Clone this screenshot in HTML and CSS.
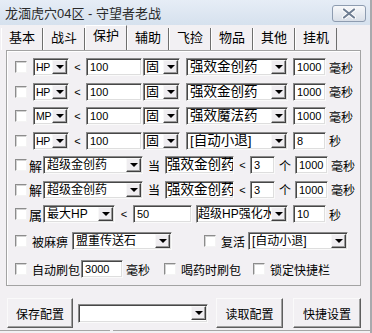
FILE: index.html
```html
<!DOCTYPE html>
<html lang="zh-CN">
<head>
  <meta charset="UTF-8" />
  <title>守望者老战</title>
  <link rel="stylesheet" href="styles.css">
</head>
<body>
  <div class="window">
    <!-- Title bar -->
    <div class="titlebar">
      <span class="title">龙湎虎穴04区 - 守望者老战</span>
      <span class="close">
        <svg width="14" height="11" viewBox="0 0 14 11">
          <path d="M2 1.5 L12 9.5 M12 1.5 L2 9.5" stroke="#fff" stroke-width="4" stroke-linecap="round" />
          <path d="M2 1.5 L12 9.5 M12 1.5 L2 9.5" stroke="#6f7e93" stroke-width="2.2" stroke-linecap="round" />
        </svg>
      </span>
    </div>

    <!-- Tabs -->
    <div class="tabs">
      <span class="tab">基本</span>
      <span class="tab">战斗</span>
      <span class="tab active">保护</span>
      <span class="tab">辅助</span>
      <span class="tab">飞捡</span>
      <span class="tab">物品</span>
      <span class="tab">其他</span>
      <span class="tab">挂机</span>
    </div>

    <!-- Protect panel -->
    <div class="panel">
      <div class="rows">
        <div class="row">
          <span class="chk"></span>
          <span class="sel stat"><span class="val">HP</span><span class="dd"></span></span>
          <span class="op">&lt;</span>
          <span class="inp amount">100</span>
          <span class="sel mode"><span class="val cn">固</span><span class="dd"></span></span>
          <span class="sel item big"><span class="val">强效金创药</span><span class="dd"></span></span>
          <span class="inp ms">1000</span>
          <span class="unit">毫秒</span>
        </div>
        <div class="row">
          <span class="chk"></span>
          <span class="sel stat"><span class="val">HP</span><span class="dd"></span></span>
          <span class="op">&lt;</span>
          <span class="inp amount">100</span>
          <span class="sel mode"><span class="val cn">固</span><span class="dd"></span></span>
          <span class="sel item big"><span class="val">强效金创药</span><span class="dd"></span></span>
          <span class="inp ms">1000</span>
          <span class="unit">毫秒</span>
        </div>
        <div class="row">
          <span class="chk"></span>
          <span class="sel stat"><span class="val">MP</span><span class="dd"></span></span>
          <span class="op">&lt;</span>
          <span class="inp amount">100</span>
          <span class="sel mode"><span class="val cn">固</span><span class="dd"></span></span>
          <span class="sel item big"><span class="val">强效魔法药</span><span class="dd"></span></span>
          <span class="inp ms">1000</span>
          <span class="unit">毫秒</span>
        </div>
        <div class="row">
          <span class="chk"></span>
          <span class="sel stat"><span class="val">HP</span><span class="dd"></span></span>
          <span class="op">&lt;</span>
          <span class="inp amount">100</span>
          <span class="sel mode"><span class="val cn">固</span><span class="dd"></span></span>
          <span class="sel item big"><span class="val">[自动小退]</span><span class="dd"></span></span>
          <span class="inp ms">8</span>
          <span class="unit">秒</span>
        </div>
        <div class="row">
          <span class="chk"></span>
          <span class="tag">解</span>
          <span class="sel potion"><span class="val">超级金创药</span><span class="dd"></span></span>
          <span class="when">当</span>
          <span class="inp target">强效金创药</span>
          <span class="op">&lt;</span>
          <span class="inp count">3</span>
          <span class="per">个</span>
          <span class="inp ms">1000</span>
          <span class="unit">毫秒</span>
        </div>
        <div class="row">
          <span class="chk"></span>
          <span class="tag">解</span>
          <span class="sel potion"><span class="val">超级金创药</span><span class="dd"></span></span>
          <span class="when">当</span>
          <span class="inp target">强效金创药</span>
          <span class="op">&lt;</span>
          <span class="inp count">3</span>
          <span class="per">个</span>
          <span class="inp ms">1000</span>
          <span class="unit">毫秒</span>
        </div>
        <div class="row">
          <span class="chk"></span>
          <span class="tag">属</span>
          <span class="sel attr"><span class="val">最大HP</span><span class="dd"></span></span>
          <span class="op wide">&lt;</span>
          <span class="inp limit">50</span>
          <span class="sel buff"><span class="val">超级HP强化水</span><span class="dd"></span></span>
          <span class="inp ms">10</span>
          <span class="unit">秒</span>
        </div>
      </div>

      <div class="row row-mid">
        <span class="chk"></span>
        <span class="label">被麻痹</span>
        <span class="sel stone"><span class="val">盟重传送石</span><span class="dd"></span></span>
        <span class="chk revive"></span>
        <span class="label">复活</span>
        <span class="sel revive-act"><span class="val">[自动小退]</span><span class="dd"></span></span>
      </div>

      <div class="row row-last">
        <span class="chk"></span>
        <span class="label">自动刷包</span>
        <span class="inp pack">3000</span>
        <span class="label">毫秒</span>
        <span class="chk drink"></span>
        <span class="label">喝药时刷包</span>
        <span class="chk lock"></span>
        <span class="label">锁定快捷栏</span>
      </div>
    </div>

    <!-- Footer -->
    <div class="footer">
      <button class="btn">保存配置</button>
      <span class="sel config"><span class="val"></span><span class="dd"></span></span>
      <button class="btn load">读取配置</button>
      <button class="btn quick">快捷设置</button>
    </div>
    <div class="status">
      <span class="pane first"></span>
      <span class="pane"></span>
    </div>
  </div>
</body>
</html>
```

FILE: styles.css
```css
* {
  box-sizing: border-box;
}

body {
  margin: 0;
  background: #ffffff;
  font-family: "Liberation Sans", "Noto Sans CJK SC", sans-serif;
  font-size: 12px;
  color: #000;
}

.window {
  width: 372px;
  height: 333px;
  background: #f2f0f3;
  border-right: 2px solid #a9a9ad;
  overflow: hidden;
}

/* title bar */
.titlebar {
  height: 25px;
  display: flex;
  align-items: center;
  justify-content: space-between;
  padding: 0 4px 0 5px;
  background: linear-gradient(#e6edf6, #d6e1ee);
}

.title {
  font-size: 13px;
  color: #2a2a2a;
}

.close {
  width: 34px;
  height: 17px;
  margin-top: 2px;
  border: 1px solid #8e9cb0;
  border-radius: 3px;
  background: linear-gradient(#f7f8fa, #d9dfe8);
  display: flex;
  align-items: center;
  justify-content: center;
}

/* tabs */
.tabs {
  height: 25px;
  display: flex;
  align-items: flex-end;
  padding-left: 1px;
}

.tab {
  width: 42px;
  height: 22px;
  font-size: 13px;
  line-height: 20px;
  text-align: center;
  border-left: 1px solid #fff;
  border-right: 1px solid #6e6e6e;
}

.tab.active {
  height: 25px;
  line-height: 20px;
  border-top: 1px solid #fff;
}

/* panel */
.panel {
  width: 355px;
  height: 236px;
  margin-left: 6px;
  border: 1px solid #a3a3a3;
  box-shadow: inset 1px 1px 0 #fff;
  padding: 7px 0 0 8px;
}

.rows {
  display: flex;
  flex-direction: column;
  gap: 6.5px;
}

.row {
  display: flex;
  align-items: center;
  height: 18px;
  white-space: nowrap;
}

.row-mid {
  margin-top: 9px;
}

.row-last {
  margin-top: 10px;
}

/* controls */
.chk {
  width: 12px;
  height: 12px;
  margin-right: 2px;
  background: #fff;
  border: 1px solid;
  border-color: #8c8c8c #f4f4f4 #f4f4f4 #8c8c8c;
  box-shadow: inset 1px 1px 0 #d2d2d2;
  flex: none;
}

.sel,
.inp {
  height: 18px;
  background: #fff;
  border: 1px solid;
  border-color: #8a8a8a #fafafa #fafafa #8a8a8a;
  box-shadow: inset 1px 1px 0 #474747, inset -1px -1px 0 #dedede;
  flex: none;
  overflow: hidden;
}

.sel {
  display: flex;
  align-items: center;
  justify-content: space-between;
  padding: 0 1px 0 3px;
}

.val {
  font-size: 11px;
  line-height: 14px;
  overflow: hidden;
}

.val.cn {
  font-size: 13px;
}

.dd {
  width: 15px;
  height: 14px;
  flex: none;
  background: #efedf0;
  border: 1px solid;
  border-color: #f8f8f8 #404040 #404040 #f8f8f8;
  box-shadow: inset -1px -1px 0 #9a9a9a;
  position: relative;
}

.dd::after {
  content: "";
  position: absolute;
  left: 3px;
  top: 4px;
  border-left: 4px solid transparent;
  border-right: 4px solid transparent;
  border-top: 4px solid #000;
}

.inp {
  font-size: 11px;
  line-height: 16px;
  padding-left: 3px;
}

.op {
  width: 17px;
  text-align: center;
  font-size: 11px;
}

.op.wide {
  width: 18px;
}

.unit,
.per,
.when,
.label {
  font-size: 12px;
}

/* row pieces */
.stat { width: 36px; margin-left: 4px; padding-left: 2px; }
.stat .val { font-size: 10.5px; letter-spacing: -0.3px; overflow: visible; }
.amount { width: 56px; }
.mode { width: 37px; margin-left: 1px; padding-left: 2px; }
.item { width: 102px; margin-left: 6px; }
.item .val { font-size: 13.5px; }
.ms { width: 33px; margin-left: 5px; }
.unit { margin-left: 3px; }

.tag {
  width: 14px;
  font-size: 13px;
}

.potion { width: 100px; }
.potion .val { font-size: 12px; }
.when { width: 22px; text-align: center; }
.target { width: 69px; font-size: 13.5px; padding-left: 1px; }
.count { width: 25px; margin-left: -1px; }
.per { width: 20px; text-align: center; }
.per + .ms { margin-left: 0; }

.attr { width: 72px; }
.attr .val { font-size: 12px; }
.limit { width: 59px; }
.buff { width: 92px; margin-left: 4px; padding-left: 1px; }
.buff .val { font-size: 12px; }

.row-mid .label,
.row-last .label {
  margin-left: 3px;
}

.stone { width: 100px; margin-left: 4px; }
.stone .val { font-size: 12px; }
.chk.revive { margin-left: 32px; }
.revive-act { width: 100px; margin-left: 3px; }
.revive-act .val { font-size: 12px; }

.pack { width: 42px; margin-left: 1px; }
.chk.drink { margin-left: 14px; }
.chk.lock { margin-left: 12px; }

/* footer */
.footer {
  display: flex;
  align-items: center;
  height: 36px;
  margin-top: 9px;
  padding-left: 7px;
}

.btn {
  width: 66px;
  height: 30px;
  padding: 0;
  font-family: inherit;
  font-size: 12px;
  color: #000;
  background: #f2f0f3;
  border: 1px solid;
  border-color: #fafafa #5e5e5e #5e5e5e #fafafa;
  box-shadow: inset -1px -1px 0 #a0a0a0;
}

.config {
  width: 130px;
  height: 19px;
  margin-left: 5px;
}

.btn.load { width: 67px; margin-left: 8px; }
.btn.quick { width: 68px; margin-left: 10px; }

.status {
  display: flex;
  gap: 3px;
  margin-top: -1px;
}

.pane {
  flex: 1;
  height: 4px;
  border-top: 1px solid #a5a5a5;
}

.pane.first {
  flex: none;
  width: 110px;
}
```
